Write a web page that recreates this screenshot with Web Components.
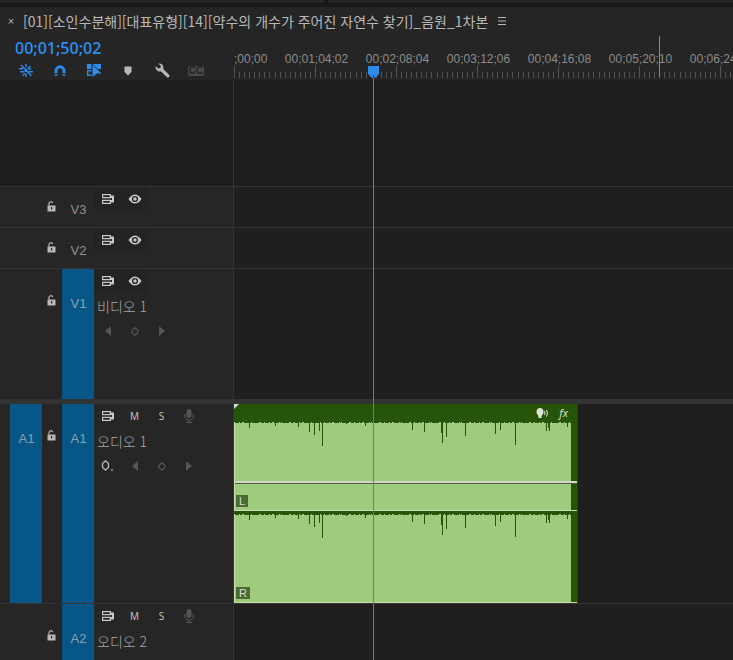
<!DOCTYPE html>
<html lang="ko">
<head>
<meta charset="utf-8">
<meta name="viewport" content="width=device-width, initial-scale=1">
<title>Timeline</title>
<style>
    body {
        margin: 0;
        background: #1f1f1f;
    }
</style>
</head>
<body>
<timeline-panel>
    <span slot="title">[01][소인수분해][대표유형][14][약수의 개수가 주어진 자연수 찾기]_음원_1차본</span>
    <track-row kind="video" target="V3" size="small"></track-row>
    <track-row kind="video" target="V2" size="small"></track-row>
    <track-row kind="video" target="V1" size="medium" active keyframes>비디오 1</track-row>
    <track-divider></track-divider>
    <track-row kind="audio" source="A1" target="A1" size="large" active keyframes>
        오디오 1
        <audio-clip slot="clip"></audio-clip>
    </track-row>
    <track-row kind="audio" target="A2" size="rest" active>오디오 2</track-row>
</timeline-panel>

<script>
const ICONS = {
    nest: { w: 14, h: 13, body: `<g stroke="currentColor" stroke-width="1.4" fill="none"><path d="M2 1l10.500 11M4 11.800l1.800-2.600M11.500 2L8.800 4.600"/><path d="M7 0v3.400M7 9.400V13" /><path d="M0 4.700h4M1 7.700h4M9.500 5h2.700M9.500 7.700H14"/></g><path d="M5.600 5.200h2.800v2.800H5.600z" fill="currentColor"/>` },
    magnet: { w: 12, h: 11, body: `<path d="M2 8V5.800a4 4 0 0 1 8 0V8" fill="none" stroke="currentColor" stroke-width="3"/><path d="M.5 8.800h3V11h-3zM8.500 8.800h3V11h-3z" fill="currentColor" opacity=".7"/>` },
    linked: { w: 15, h: 13, body: `<path d="M0 0h4.500v5H0zM5.500 0H14v5h-3L5.500 0z" fill="currentColor"/><path d="M4.500 6.700H.7v4.600h3.800" fill="none" stroke="currentColor" stroke-width="1.400"/><path d="M5.500.5L14.500 9.500H10L5.500 13z" fill="currentColor"/>` },
    marker: { w: 8, h: 10, body: `<path d="M.5 1.500Q.5.500 1.500.500h5q1 0 1 1V6L4 9.500.5 6z" fill="currentColor"/>` },
    wrench: { w: 15, h: 15, body: `<path d="M3.200.6a4.200 4.200 0 0 1 5 5.300l5.800 5.900a1.500 1.500 0 0 1-2.200 2.200L5.900 8.200A4.200 4.200 0 0 1 .6 3.200l2.600 2.400 2.200-.6.500-2.100z" fill="currentColor"/>` },
    menu: { w: 8, h: 8, body: `<path d="M0 .5h8M0 4h8M0 7.500h8" stroke="currentColor"/>` },
    lock: { w: 10, h: 12, body: `<path d="M.5 4.500h8v6h-8z" fill="currentColor"/><path d="M2 4.500V2.600A1.900 1.900 0 0 1 5.700 2" fill="none" stroke="currentColor" stroke-width="1.200"/><path d="M4 6h1.200v2.500H4z" fill="#262626"/>` },
    sync: { w: 12, h: 10, body: `<path d="M.6.6h7.800v3H.6zM.6 6.400h7.800v3H.6z" fill="none" stroke="currentColor" stroke-width="1.200"/><path d="M8.500 1.500H12v7H8.500V6H10V4H8.500z" fill="currentColor"/>` },
    eye: { w: 14, h: 10, body: `<path d="M.5 5Q3.500.5 7 .5T13.500 5Q10.500 9.500 7 9.500T.5 5z" fill="currentColor"/><circle cx="7" cy="5" r="3.100" fill="#262626"/><circle cx="7" cy="5" r="1.700" fill="currentColor"/>` },
    mic: { w: 10, h: 14, body: `<rect x="2.500" y="0" width="5" height="9" rx="2.500" fill="currentColor"/><path d="M.6 5v2.200a4.400 3.800 0 0 0 8.800 0V5M5 11v2.400M2 13.400h6" fill="none" stroke="currentColor" stroke-width="1.100"/>` },
    prev: { w: 6, h: 10, body: `<path d="M6 0v10L0 5z" fill="currentColor"/>` },
    next: { w: 6, h: 10, body: `<path d="M0 0v10l6-5z" fill="currentColor"/>` },
    key: { w: 8, h: 9, body: `<path d="M4 .8l3 2.700v2L4 8.200 1 5.500v-2z" fill="none" stroke="currentColor" stroke-width="1.200"/>` },
    keymode: { w: 13, h: 12, body: `<path d="M4.500.8L7.500 3.500v3.700L4.500 10.200 1.500 7.200V3.500z" fill="none" stroke="currentColor" stroke-width="1.300"/><path d="M9.500 9.500h3L11 11.300z" fill="currentColor"/>` },
    voice: { w: 13, h: 10, body: `<path d="M3.500 0h1Q7.500.5 7.500 4q0 1.500-1 2.500L5.500 8v2h-3V8Q.5 6.500.5 4 .5.500 3.500 0z" fill="currentColor"/><path d="M8.500 3q1 2 0 4M10.500 2q2 3 0 6.500" fill="none" stroke="currentColor"/>` }
};

const LATIN = '"Liberation Sans", "Noto Sans CJK KR", sans-serif';
const HANGUL = '"Noto Sans CJK KR", "Liberation Sans", sans-serif';

const BUTTON_CSS = `
    button {
        display: flex;
        align-items: center;
        justify-content: center;
        padding: 0;
        border: 0;
        background: none;
        color: inherit;
        font: inherit;
    }
`;

class TimelineIcon extends HTMLElement {
    constructor() {
        super();
        this.attachShadow({ mode: 'open' });
    }

    connectedCallback() {
        const icon = ICONS[this.getAttribute('name')];
        this.shadowRoot.innerHTML = `
      <style>
        :host { display: block; }
        svg { display: block; }
      </style>
      <svg width="${icon.w}" height="${icon.h}" viewBox="0 0 ${icon.w} ${icon.h}" aria-hidden="true">${icon.body}</svg>
    `;
    }
}

class TimeRuler extends HTMLElement {
    constructor() {
        super();
        this.attachShadow({ mode: 'open' });
    }

    connectedCallback() {
        const labels = [';00;00', '00;01;04;02', '00;02;08;04', '00;03;12;06', '00;04;16;08', '00;05;20;10', '00;06;24;12'];
        // 16 steps per label, the first of them is the tall one
        let ticks = '';
        for (let i = 0; i < 16; i++) {
            const x = Math.round(i * 81 / 16);
            ticks += `<rect x="${x}" y="${i ? 6 : 0}" width="1" height="${i ? 6 : 12}"/>`;
        }

        this.shadowRoot.innerHTML = `
      <style>
        :host {
          display: block;
          position: relative;
          overflow: hidden;
          font: 12px/14px ${LATIN};
          color: #8c8c8c;
        }
        .steps { display: flex; padding-top: 17px; }
        .step { flex: 0 0 81px; }
        .label { width: 81px; margin-left: -39px; text-align: center; }
        .step:first-child .label { width: auto; margin-left: 0; text-align: left; }
        svg { display: block; fill: #555; }
        .end {
          position: absolute;
          left: 425px;
          top: 1px;
          width: 1px;
          height: 41px;
          background: #8a8a8a;
        }
      </style>
      <div class="steps">
        ${labels.map(label => `
          <div class="step">
            <div class="label">${label}</div>
            <svg width="81" height="12">${ticks}</svg>
          </div>
        `).join('')}
      </div>
      <div class="end"></div>
    `;
    }
}

class TrackDivider extends HTMLElement {
    constructor() {
        super();
        this.attachShadow({ mode: 'open' }).innerHTML = `
      <style>
        :host { display: block; flex: none; height: 5px; background: #333; }
      </style>
    `;
    }
}

class TrackRow extends HTMLElement {
    constructor() {
        super();
        this.attachShadow({ mode: 'open' });
    }

    connectedCallback() {
        const audio = this.getAttribute('kind') === 'audio';
        const source = this.getAttribute('source');
        const target = this.getAttribute('target');
        const button = (name, label) => `<button aria-label="${label}"><timeline-icon name="${name}"></timeline-icon></button>`;

        const toggles = button('sync', 'Sync lock') + (audio
            ? `<button>M</button><button>S</button><button class="dim" aria-label="Record"><timeline-icon name="mic"></timeline-icon></button>`
            : button('eye', 'Track output'));

        const keyframes = !this.hasAttribute('keyframes') ? '' : `
            <div class="keys">
              ${audio ? `<span class="mode">${button('keymode', 'Show keyframes')}</span>` : ''}
              ${button('prev', 'Previous keyframe')}
              ${button('key', 'Add keyframe')}
              ${button('next', 'Next keyframe')}
            </div>`;

        this.shadowRoot.innerHTML = `
      <style>
        :host {
          display: grid;
          grid-template-columns: 234px minmax(0, 1fr);
          flex: none;
          color: #b8b8b8;
        }
        :host([size="small"]) { height: 41px; --mark: 40px; }
        :host([size="medium"]) { height: 131px; --mark: 63px; }
        :host([size="large"]) { height: 199px; --mark: 63px; }
        :host([size="rest"]) { flex: 1 0 57px; --mark: 63px; }
        ${BUTTON_CSS}
        .head {
          display: grid;
          grid-template-columns: 32px 20px 32px minmax(0, 1fr);
          padding-left: 10px;
          background: #262626;
          border-right: 1px solid #333;
          box-sizing: border-box;
        }
        .head, .lane { border-top: 1px solid #333; }
        :host([size="large"]) .head, :host([size="large"]) .lane { border-top: 0; }
        .patch {
          align-items: flex-start;
          padding-left: 1px;
          font: 13px/20px ${LATIN};
          color: #8f8f8f;
        }
        .patch span { padding-top: calc(var(--mark) / 2 - 7px); }
        .on { background: #065788; color: #8ba0ac; }
        .lock { height: var(--mark); }
        .controls { min-width: 0; }
        .toggles, .keys { display: flex; }
        .toggles { width: max-content; height: 24px; font: 10px/24px "Open Sans", sans-serif; color: #c8c8c8; }
        :host([kind="video"]) .toggles { background: #232323; }
        .toggles button, .keys button { width: 27px; height: 24px; }
        .name { padding-left: 3px; font: 300 14px/26px ${HANGUL}; color: #a6a6a6; }
        .keys, .toggles .dim { color: #555; }
        .mode { color: #b8b8b8; }
        .lane { background: #1f1f1f; min-width: 0; overflow: hidden; }
      </style>
      <div class="head">
        ${source ? `<button class="patch on"><span>${source}</span></button>` : '<div></div>'}
        <button class="lock" aria-label="Lock track"><timeline-icon name="lock"></timeline-icon></button>
        <button class="patch ${this.hasAttribute('active') ? 'on' : ''}"><span>${target}</span></button>
        <div class="controls">
          <div class="toggles">${toggles}</div>
          <div class="name"><slot></slot></div>
          ${keyframes}
        </div>
      </div>
      <div class="lane"><slot name="clip"></slot></div>
    `;
    }
}

class AudioClip extends HTMLElement {
    constructor() {
        super();
        this.attachShadow({ mode: 'open' });
    }

    wave() {
        // [x, length] of the peaks below the baseline
        const peaks = [
            [14, 6], [40, 4], [63, 5], [74, 10], [79, 13], [84, 9], [87, 24], [111, 2], [130, 4],
            [177, 8], [189, 10], [206, 11], [207, 21], [211, 15], [230, 14], [260, 12], [265, 8],
            [280, 23], [311, 9], [313, 6], [314, 9], [332, 5]
        ];
        return peaks.map(([x, len]) => `<rect x="${x}" y="0" width="1" height="${len}"/>`).join('')
            + '<path d="M0 .5h337" fill="none" stroke="#265409" stroke-dasharray="4 1 2 2 5 1 1 1 7 2 3 1"/>';
    }

    connectedCallback() {
        this.shadowRoot.innerHTML = `
      <style>
        :host {
          display: flex;
          flex-direction: column;
          position: relative;
          box-sizing: border-box;
          width: 344px;
          height: 199px;
          border-right: 1px solid #333;
          background: #265409;
          color: #dfe6d8;
        }
        .bar {
          display: flex;
          flex: none;
          align-items: center;
          justify-content: flex-end;
          gap: 10px;
          height: 18px;
          padding-right: 9px;
        }
        .fx { font: italic 11px/18px "Open Sans", sans-serif; }
        .corner { position: absolute; left: 0; top: 0; fill: #d8d8d8; }
        .channel {
          display: flex;
          flex-direction: column;
          box-sizing: border-box;
          border-left: 1px solid #c4dfae;
          border-bottom: 1px solid #c4dfae;
        }
        .left { height: 89px; }
        .right { height: 89px; margin-top: 3px; }
        .body {
          flex: 1;
          display: flex;
          align-items: flex-end;
          position: relative;
          margin-right: 6px;
          background: #9fcc7c;
        }
        .body svg { position: absolute; left: 0; top: 0; fill: #265409; }
        .mark {
          margin: 0 0 3px 1px;
          padding: 0 3px;
          background: #4c6a38;
          font: 11px/12px ${LATIN};
          color: #d5dccf;
        }
        .level {
          position: absolute;
          left: 1px;
          right: 0;
          top: 77px;
          height: 2px;
          background: #d6d8c6;
          border-bottom: 1px solid #505848;
        }
      </style>
      <svg class="corner" width="5" height="5" aria-hidden="true"><path d="M0 0h5L0 5z"/></svg>
      <div class="bar">
        <timeline-icon name="voice"></timeline-icon>
        <span class="fx">fx</span>
      </div>
      <div class="channel left">
        <div class="body"><svg width="337" height="30" aria-hidden="true">${this.wave()}</svg><span class="mark">L</span></div>
      </div>
      <div class="channel right">
        <div class="body"><svg width="337" height="30" aria-hidden="true">${this.wave()}</svg><span class="mark">R</span></div>
      </div>
      <div class="level"></div>
    `;
    }
}

class TimelinePanel extends HTMLElement {
    constructor() {
        super();
        this.attachShadow({ mode: 'open' });
    }

    connectedCallback() {
        const tools = [
            ['nest', 'Insert as nest', 'on'],
            ['magnet', 'Snap', 'on'],
            ['linked', 'Linked selection', 'on'],
            ['marker', 'Add marker', ''],
            ['wrench', 'Display settings', '']
        ];

        this.shadowRoot.innerHTML = `
      <style>
        :host {
          display: flex;
          flex-direction: column;
          min-height: 100vh;
          background: #252525;
          color: #b8b8b8;
        }
        ${BUTTON_CSS}
        .edge {
          display: grid;
          grid-template-columns: 324px 1fr;
          gap: 4px;
          height: 3px;
          border-bottom: 4px solid #181818;
          background: #181818;
        }
        .edge i { background: #262626; }
        .tab {
          display: flex;
          align-items: center;
          height: 28px;
          padding-left: 7px;
          font: 14px/28px ${HANGUL};
        }
        .tab .close { width: 8px; margin-right: 8px; font: 11px/28px ${LATIN}; }
        .tab .menu { margin-left: 10px; }
        .work {
          display: flex;
          flex: 1;
          flex-direction: column;
          position: relative;
          overflow: hidden;
        }
        .top { display: grid; grid-template-columns: 234px minmax(0, 1fr); height: 45px; }
        .time {
          padding-left: 15px;
          font: 600 16px/26px "Open Sans", sans-serif;
          color: #2d8ceb;
        }
        .tools { display: flex; padding-left: 9px; }
        .tools button { width: 34px; height: 19px; }
        .on { color: #2d8ceb; }
        .cc {
          padding: 0 1px;
          border-radius: 2px;
          background: #4a4a4a;
          font: bold 10px/10px ${LATIN};
          color: #202020;
        }
        .space { display: grid; grid-template-columns: 233px 1fr; gap: 1px; height: 106px; background: #333; }
        .space i { background: #1e1e1e; }
        .playhead {
          display: flex;
          flex-direction: column;
          align-items: center;
          position: absolute;
          left: 368px;
          top: 31px;
          bottom: 0;
          width: 11px;
        }
        .playhead svg { display: block; flex: none; fill: #2d8ceb; }
        .playhead i { flex: 1; width: 1px; background: #2d8ceb; }
      </style>
      <div class="edge"><i></i><i></i></div>
      <div class="tab">
        <button class="close" aria-label="Close">×</button>
        <slot name="title"></slot>
        <button class="menu" aria-label="Panel menu"><timeline-icon name="menu"></timeline-icon></button>
      </div>
      <div class="work">
        <div class="top">
          <div>
            <div class="time">00;01;50;02</div>
            <div class="tools">
              ${tools.map(([name, label, state]) => `
                <button class="${state}" aria-label="${label}"><timeline-icon name="${name}"></timeline-icon></button>
              `).join('')}
              <button><span class="cc">CC</span></button>
            </div>
          </div>
          <time-ruler></time-ruler>
        </div>
        <div class="space"><i></i><i></i></div>
        <slot></slot>
        <div class="playhead">
          <svg width="11" height="12" aria-hidden="true"><path d="M0 0h11v8l-4 4H4L0 8z"/><path d="M5 9h1v3H5z" fill="#123"/></svg>
          <i></i>
        </div>
      </div>
    `;
    }
}

customElements.define('timeline-icon', TimelineIcon);
customElements.define('time-ruler', TimeRuler);
customElements.define('track-divider', TrackDivider);
customElements.define('track-row', TrackRow);
customElements.define('audio-clip', AudioClip);
customElements.define('timeline-panel', TimelinePanel);
</script>
</body>
</html>
